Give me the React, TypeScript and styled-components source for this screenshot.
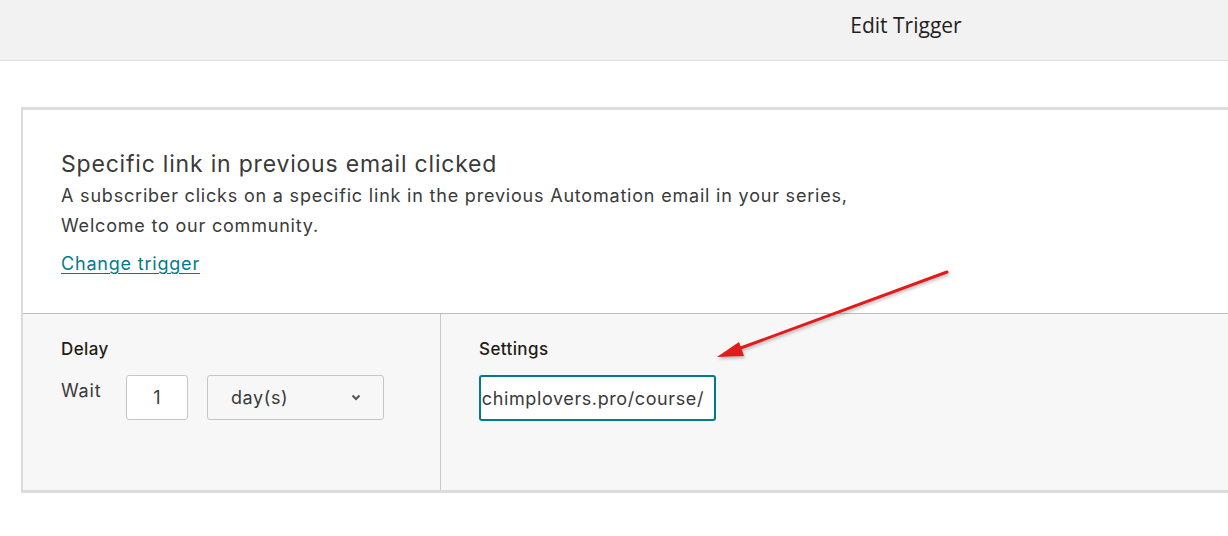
import styled, { createGlobalStyle } from "styled-components";

const GlobalStyle = createGlobalStyle`
  html, body {
    margin: 0;
    padding: 0;
    background: #ffffff;
    overflow: hidden;
  }
  body {
    font-family: "Inter", "Noto Sans", sans-serif;
    color: #241c15;
  }
`;

const Page = styled.div`
  position: relative;
  width: 1228px;
  height: 536px;
`;

const Header = styled.header`
  height: 61px;
  background: #f2f2f2;
  border-bottom: 1px solid #dedede;
  display: flex;
  align-items: center;
  justify-content: center;
  padding-left: 584px;
  box-sizing: border-box;
`;

const HeaderTitle = styled.h1`
  margin: 0 0 10px;
  font-family: "Open Sans", sans-serif;
  font-weight: 400;
  font-size: 21px;
  color: #1f1f1f;
`;

const Main = styled.main`
  padding: 46px 0 0 21px;
`;

const Card = styled.section`
  width: 1240px;
  border: 3px solid #dcdcdc;
  border-right: none;
  border-left-width: 2px;
`;

const TriggerInfo = styled.div`
  height: 204px;
  box-sizing: border-box;
  padding: 39px 38px 0;
  background: #ffffff;
  border-bottom: 1px solid #bdbdbd;
`;

const TriggerTitle = styled.h2`
  margin: 0;
  font-weight: 400;
  font-size: 23px;
  letter-spacing: 0.8px;
  line-height: 30px;
  color: #3a3a3a;
`;

const TriggerDesc = styled.p`
  margin: 2px 0 0;
  font-size: 18px;
  letter-spacing: 0.8px;
  line-height: 30px;
  color: #3a3a3a;
`;

const ChangeLink = styled.a`
  display: inline-block;
  margin-top: 8px;
  font-size: 18px;
  letter-spacing: 0.8px;
  line-height: 30px;
  color: #007c89;
  text-decoration: underline;
  text-underline-offset: 3px;
  cursor: pointer;
`;

const Options = styled.div`
  display: grid;
  grid-template-columns: 418px 1fr;
  height: 176px;
  background: #f7f7f7;
`;

const OptionCol = styled.div<{ $divider?: boolean }>`
  padding: 24px 38px 0;
  border-right: ${(p) => (p.$divider ? "1px solid #c8c8c8" : "none")};
`;

const OptionLabel = styled.h3`
  margin: 0 0 15px;
  font-weight: 500;
  font-size: 17px;
  letter-spacing: 0.4px;
  line-height: 22px;
  color: #241c15;
`;

const Row = styled.div`
  display: flex;
  align-items: flex-start;
`;

const WaitText = styled.span`
  width: 65px;
  padding-top: 1px;
  font-size: 18px;
  letter-spacing: 0.8px;
  line-height: 30px;
  color: #3a3a3a;
`;

const NumberBox = styled.div`
  width: 62px;
  height: 45px;
  box-sizing: border-box;
  background: #ffffff;
  border: 1px solid #c6c6c6;
  border-radius: 3px;
  display: flex;
  align-items: center;
  justify-content: center;
  font-size: 18px;
  color: #3a3a3a;
  margin-right: 19px;
`;

const SelectBox = styled.div`
  width: 177px;
  height: 45px;
  box-sizing: border-box;
  background: #f7f7f7;
  border: 1px solid #c6c6c6;
  border-radius: 3px;
  display: flex;
  align-items: center;
  justify-content: space-between;
  padding: 0 22px 0 23px;
  font-size: 18px;
  letter-spacing: 0.6px;
  color: #3a3a3a;
`;

const UrlBox = styled.div`
  width: 237px;
  height: 46px;
  box-sizing: border-box;
  background: #ffffff;
  border: 2px solid #007c89;
  border-radius: 3px;
  display: flex;
  align-items: center;
  justify-content: flex-end;
  padding: 0 10px 0 8px;
  overflow: hidden;
  white-space: nowrap;
  font-size: 18px;
  letter-spacing: 0.6px;
  color: #3a3a3a;
`;

const ArrowLayer = styled.svg`
  position: absolute;
  left: 0;
  top: 0;
  pointer-events: none;
`;

function Chevron() {
  return (
    <svg width="10" height="7" viewBox="0 0 10 7">
      <path d="M1.5 1.5 L5 5 L8.5 1.5" fill="none" stroke="#555" strokeWidth="2" />
    </svg>
  );
}

export default function App() {
  return (
    <Page>
      <GlobalStyle />
      <Header>
        <HeaderTitle>Edit Trigger</HeaderTitle>
      </Header>
      <Main>
        <Card>
          <TriggerInfo>
            <TriggerTitle>Specific link in previous email clicked</TriggerTitle>
            <TriggerDesc>
              A subscriber clicks on a specific link in the previous Automation email in your series,
              <br />
              Welcome to our community.
            </TriggerDesc>
            <ChangeLink>Change trigger</ChangeLink>
          </TriggerInfo>
          <Options>
            <OptionCol $divider>
              <OptionLabel>Delay</OptionLabel>
              <Row>
                <WaitText>Wait</WaitText>
                <NumberBox>1</NumberBox>
                <SelectBox>
                  day(s)
                  <Chevron />
                </SelectBox>
              </Row>
            </OptionCol>
            <OptionCol>
              <OptionLabel>Settings</OptionLabel>
              <UrlBox>chimplovers.pro/course/</UrlBox>
            </OptionCol>
          </Options>
        </Card>
      </Main>
      <ArrowLayer width="1228" height="536" viewBox="0 0 1228 536">
        <defs>
          <filter id="sh" x="-10%" y="-10%" width="120%" height="130%">
            <feDropShadow dx="1" dy="2" stdDeviation="1.5" floodColor="#000" floodOpacity="0.25" />
          </filter>
        </defs>
        <g filter="url(#sh)">
          <line x1="947" y1="272" x2="738" y2="349" stroke="#e01b1b" strokeWidth="3" strokeLinecap="round" />
          <polygon points="717,357 739,342 744,356" fill="#e01b1b" />
        </g>
      </ArrowLayer>
    </Page>
  );
}
